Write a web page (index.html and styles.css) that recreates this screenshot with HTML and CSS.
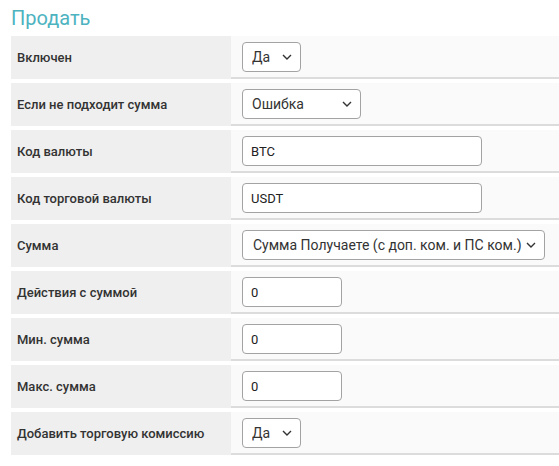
FILE: index.html
```html
<!DOCTYPE html>
<html lang="ru">
<head>
<meta charset="utf-8">
<title>Продать</title>
<link rel="stylesheet" href="styles.css">
</head>
<body>
<div class="page">
  <h2 class="title">Продать</h2>
  <div class="form">
    <div class="row">
      <div class="label">Включен</div>
      <div class="value">
        <span class="sel w-yes"><select><option>Да</option></select><svg class="chev" width="10" height="6" viewBox="0 0 10 6"><path d="M1 1l4 4 4-4" fill="none" stroke="#333" stroke-width="1.4"/></svg></span>
      </div>
    </div>
    <div class="row">
      <div class="label">Если не подходит сумма</div>
      <div class="value">
        <span class="sel w-err"><select><option>Ошибка</option></select><svg class="chev" width="10" height="6" viewBox="0 0 10 6"><path d="M1 1l4 4 4-4" fill="none" stroke="#333" stroke-width="1.4"/></svg></span>
      </div>
    </div>
    <div class="row">
      <div class="label">Код валюты</div>
      <div class="value"><input class="inp w-long" type="text" value="BTC"></div>
    </div>
    <div class="row">
      <div class="label">Код торговой валюты</div>
      <div class="value"><input class="inp w-long" type="text" value="USDT"></div>
    </div>
    <div class="row">
      <div class="label">Сумма</div>
      <div class="value">
        <span class="sel w-sum"><select><option>Сумма Получаете (с доп. ком. и ПС ком.)</option></select><svg class="chev" width="10" height="6" viewBox="0 0 10 6"><path d="M1 1l4 4 4-4" fill="none" stroke="#333" stroke-width="1.4"/></svg></span>
      </div>
    </div>
    <div class="row">
      <div class="label">Действия с суммой</div>
      <div class="value"><input class="inp w-short" type="text" value="0"></div>
    </div>
    <div class="row">
      <div class="label">Мин. сумма</div>
      <div class="value"><input class="inp w-short" type="text" value="0"></div>
    </div>
    <div class="row">
      <div class="label">Макс. сумма</div>
      <div class="value"><input class="inp w-short" type="text" value="0"></div>
    </div>
    <div class="row">
      <div class="label">Добавить торговую комиссию</div>
      <div class="value">
        <span class="sel w-yes"><select><option>Да</option></select><svg class="chev" width="10" height="6" viewBox="0 0 10 6"><path d="M1 1l4 4 4-4" fill="none" stroke="#333" stroke-width="1.4"/></svg></span>
      </div>
    </div>
  </div>
</div>
</body>
</html>
```

FILE: styles.css
```css
html, body {
  margin: 0;
  padding: 0;
  background: #ffffff;
}

body {
  font-family: Roboto, "Liberation Sans", sans-serif;
  color: #333333;
}

.page {
  padding: 6px 0 0 11px;
}

.title {
  margin: 0 0 6px 0;
  font-size: 20px;
  line-height: 24px;
  font-weight: 400;
  color: #4db3bf;
}

.form {
  display: flex;
  flex-direction: column;
  gap: 4px;
}

.row {
  display: grid;
  grid-template-columns: 220px 1fr;
}

.label {
  background: #efefef;
  display: flex;
  align-items: center;
  padding-left: 6px;
  font-size: 13px;
  font-weight: 500;
  color: #333333;
}

.value {
  background: #fafafa;
  border-bottom: 2px solid #dcdcdc;
  padding: 6px 11px 5px 11px;
  display: flex;
  align-items: center;
}

.sel {
  position: relative;
  display: inline-block;
  height: 30px;
}

.sel select {
  appearance: none;
  -webkit-appearance: none;
  box-sizing: border-box;
  height: 30px;
  width: 100%;
  margin: 0;
  padding: 0 20px 0 9px;
  border: 1px solid #a3a3a3;
  border-radius: 4px;
  background: #ffffff;
  font-family: Roboto, "Liberation Sans", sans-serif;
  font-size: 14px;
  color: #333333;
  outline: none;
}

.chev {
  position: absolute;
  right: 9px;
  top: 12px;
  pointer-events: none;
}

.w-yes { width: 59px; }
.w-err { width: 119px; }
.w-sum { width: 303px; }
.w-sum select { padding-left: 10px; }

.inp {
  box-sizing: border-box;
  height: 30px;
  margin: 0;
  padding: 0 8px;
  border: 1px solid #a3a3a3;
  border-radius: 4px;
  background: #ffffff;
  font-family: Roboto, "Liberation Sans", sans-serif;
  font-size: 13px;
  color: #222222;
  outline: none;
}

.w-long { width: 240px; }
.w-short { width: 100px; }
```
